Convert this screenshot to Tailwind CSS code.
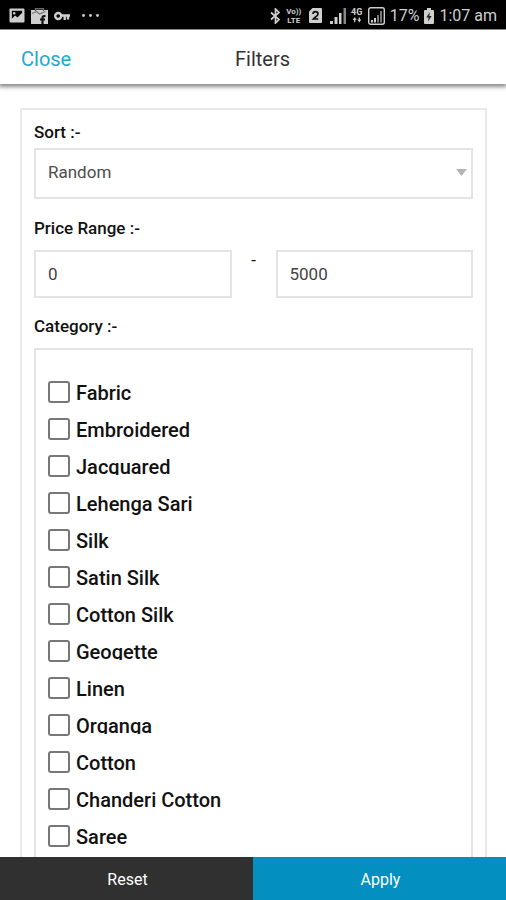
<!DOCTYPE html>
<html lang="en">
<head>
<meta charset="utf-8">
<meta name="viewport" content="width=device-width, initial-scale=1">
<title>Filters</title>
<script src="https://cdn.jsdelivr.net/npm/@tailwindcss/browser@4"></script>
</head>
<body class="flex h-screen flex-col overflow-hidden bg-white font-['Roboto',sans-serif] text-[#111111]">

<!-- Status bar -->
<div class="flex h-[30px] shrink-0 items-center justify-between border-b border-[#999999] bg-black pt-[2px] pr-[9px] pl-[9px] text-[#cfcfcf]">
  <div class="flex items-center gap-[6px]">
    <svg class="h-[15px] w-4" viewBox="0 0 16 16" fill="currentColor" aria-hidden="true"><path fill-rule="evenodd" d="M1 0.500h14a1 1 0 0 1 1 1v13a1 1 0 0 1-1 1H1a1 1 0 0 1-1-1v-13a1 1 0 0 1 1-1zM2.500 3v8.500L6 8l2.500 2 5-5V3z"/><circle cx="5" cy="5.500" r="1.300"/></svg>
    <svg class="h-4 w-[17px]" viewBox="0 0 17 16" aria-hidden="true"><path d="M0 2h17v14H0z" fill="#cfcfcf"/><path d="M4.500 3V.7h8V3" fill="none" stroke="#666666" stroke-width="1.400"/><path d="M1 5.500l4.500-2 3 2.500 6-2.500" fill="none" stroke="#777777" stroke-width="1.300"/><path d="M14.500 8h-1.300c-1.200 0-1.700.7-1.700 2v6M9 11.500h5" fill="none" stroke="#111111" stroke-width="2.200"/></svg>
    <svg class="h-4 w-4" viewBox="0 0 16 16" fill="none" stroke="currentColor" stroke-width="2.400" aria-hidden="true"><circle cx="4.200" cy="8" r="3"/><path d="M7.300 7.500H16M10.700 8v4M14 8v3.500"/></svg>
    <svg class="ml-[6px] h-4 w-[17px]" viewBox="0 0 17 16" fill="currentColor" aria-hidden="true"><circle cx="1.500" cy="7.500" r="1.400"/><circle cx="8.500" cy="7.500" r="1.400"/><circle cx="15.500" cy="7.500" r="1.400"/></svg>
  </div>
  <div class="flex items-center gap-[5px]">
    <svg class="h-4 w-[11px]" viewBox="0 0 11 16" fill="none" stroke="currentColor" stroke-width="1.700" aria-hidden="true"><path d="M1 4.500l8 7L5.500 15V1L9 4.500l-8 7"/></svg>
    <div class="flex w-4 flex-col items-center text-[8px] leading-[9px] font-bold"><span>Vo))</span><span>LTE</span></div>
    <svg class="ml-[2px] h-[15px] w-[13px]" viewBox="0 0 13 15" aria-hidden="true"><path d="M3.500 0H12a1 1 0 0 1 1 1v13a1 1 0 0 1-1 1H1a1 1 0 0 1-1-1V3.500z" fill="#cfcfcf"/><path d="M4 6c0-3.200 5-3.200 5 0 0 2-3 3-4.700 5H9.300" fill="none" stroke="#111111" stroke-width="1.700"/></svg>
    <svg class="ml-[3px] h-4 w-4" viewBox="0 0 16 16" fill="currentColor" aria-hidden="true"><path d="M0 13h3v3H0zM4.500 9h3v7h-3zM9 5h2.500v11H9z"/><path d="M13.500 0H16v16h-2.500z" fill="#888888"/></svg>
    <div class="flex w-[12px] flex-col items-center text-[9px] leading-[9px] font-bold"><span>4G</span>
      <svg class="h-[6px] w-[10px]" viewBox="0 0 10 7" fill="currentColor" aria-hidden="true"><path d="M0 3.500L2.300 0l2.300 3.500H3v2.500H1.600V3.500zM5.400 3L7.700 6.500 10 3H8.400V.5H7V3z"/></svg>
    </div>
    <svg class="h-[18px] w-[17px]" viewBox="0 0 17 18" fill="currentColor" aria-hidden="true"><rect x=".7" y=".7" width="15.600" height="16.600" rx="2" fill="none" stroke="currentColor" stroke-width="1.400"/><path d="M3 13h2v2.500H3zM6 11h2v4.500H6z"/><path d="M9 8h2v7.500H9zM12 4h2v11.500h-2z" fill="#777777"/></svg>
    <span class="text-[16px] leading-5">17%</span>
    <svg class="h-4 w-[10px]" viewBox="0 0 10 16" aria-hidden="true"><path d="M3 0h4v2h2a1 1 0 0 1 1 1v12a1 1 0 0 1-1 1H1a1 1 0 0 1-1-1V3a1 1 0 0 1 1-1h2z" fill="#cfcfcf"/><path d="M5.800 4L2.300 9.500h2.300L4 13.500 7.700 8H5.300z" fill="#222222"/></svg>
    <span class="text-[16px] leading-5">1:07 am</span>
  </div>
</div>

<!-- Title bar -->
<header class="z-10 grid h-[54px] shrink-0 grid-cols-[1fr_auto_1fr] items-center bg-white pt-1 pr-[2px] pl-[21px] shadow-[0_2px_4px_1px_rgba(0,0,0,0.45)]">
  <a href="#" class="text-[20px] leading-6 text-[#23a9d0]">Close</a>
  <h1 class="text-[20px] leading-6 text-[#333333]">Filters</h1>
</header>

<form class="flex min-h-0 flex-1 flex-col">
  <main class="min-h-0 flex-1 overflow-hidden pt-6 pr-[19px] pl-5">
    <div class="border-2 border-[#e9e9e9] px-3 pt-3 pb-4">
      <label for="sort" class="block text-[17px] leading-5 font-medium">Sort :-</label>
      <div class="relative mt-[6px]">
        <select id="sort" class="block h-[51px] w-full appearance-none rounded-none border-2 border-[#e4e4e4] bg-white px-3 pb-[2px] text-[17px] text-[#4c4c4c]">
          <option>Random</option>
        </select>
        <svg class="pointer-events-none absolute top-[21px] right-[6px] h-[7px] w-[11px]" viewBox="0 0 11 7" fill="#b4b4b4" aria-hidden="true"><path d="M0 0h11L5.500 7z"/></svg>
      </div>

      <fieldset class="mt-[19px] min-w-0">
        <legend class="text-[17px] leading-5 font-medium">Price Range :-</legend>
        <div class="mt-3 flex">
          <input type="text" aria-label="Minimum price" value="0" class="h-12 min-w-0 flex-1 border-2 border-[#e4e4e4] px-3 text-[17px] text-[#444444]">
          <span class="w-11 text-center text-[17px] leading-5">-</span>
          <input type="text" aria-label="Maximum price" value="5000" class="h-12 min-w-0 flex-1 border-2 border-[#e4e4e4] px-3 text-[17px] text-[#444444]">
        </div>
      </fieldset>

      <fieldset class="mt-[18px] min-w-0">
        <legend class="text-[17px] leading-5 font-medium">Category :-</legend>
        <div class="mt-3 border-2 border-[#e4e4e4] px-3 py-[23px] text-[20px] leading-5 font-medium">
          <label class="flex h-[37px] items-center gap-[6px]"><input type="checkbox" class="h-[22px] w-[22px] appearance-none rounded-[3px] border-2 border-[#777777] bg-white checked:bg-[#0390c0]"><span class="h-[18px]">Fabric</span></label>
          <label class="flex h-[37px] items-center gap-[6px]"><input type="checkbox" class="h-[22px] w-[22px] appearance-none rounded-[3px] border-2 border-[#777777] bg-white checked:bg-[#0390c0]"><span class="h-[18px]">Embroidered</span></label>
          <label class="flex h-[37px] items-center gap-[6px]"><input type="checkbox" class="h-[22px] w-[22px] appearance-none rounded-[3px] border-2 border-[#777777] bg-white checked:bg-[#0390c0]"><span class="h-[18px] overflow-hidden">Jacquared</span></label>
          <label class="flex h-[37px] items-center gap-[6px]"><input type="checkbox" class="h-[22px] w-[22px] appearance-none rounded-[3px] border-2 border-[#777777] bg-white checked:bg-[#0390c0]"><span class="h-[18px]">Lehenga Sari</span></label>
          <label class="flex h-[37px] items-center gap-[6px]"><input type="checkbox" class="h-[22px] w-[22px] appearance-none rounded-[3px] border-2 border-[#777777] bg-white checked:bg-[#0390c0]"><span class="h-[18px]">Silk</span></label>
          <label class="flex h-[37px] items-center gap-[6px]"><input type="checkbox" class="h-[22px] w-[22px] appearance-none rounded-[3px] border-2 border-[#777777] bg-white checked:bg-[#0390c0]"><span class="h-[18px]">Satin Silk</span></label>
          <label class="flex h-[37px] items-center gap-[6px]"><input type="checkbox" class="h-[22px] w-[22px] appearance-none rounded-[3px] border-2 border-[#777777] bg-white checked:bg-[#0390c0]"><span class="h-[18px]">Cotton Silk</span></label>
          <label class="flex h-[37px] items-center gap-[6px]"><input type="checkbox" class="h-[22px] w-[22px] appearance-none rounded-[3px] border-2 border-[#777777] bg-white checked:bg-[#0390c0]"><span class="h-[18px] overflow-hidden">Geogette</span></label>
          <label class="flex h-[37px] items-center gap-[6px]"><input type="checkbox" class="h-[22px] w-[22px] appearance-none rounded-[3px] border-2 border-[#777777] bg-white checked:bg-[#0390c0]"><span class="h-[18px]">Linen</span></label>
          <label class="flex h-[37px] items-center gap-[6px]"><input type="checkbox" class="h-[22px] w-[22px] appearance-none rounded-[3px] border-2 border-[#777777] bg-white checked:bg-[#0390c0]"><span class="h-[18px] overflow-hidden">Organga</span></label>
          <label class="flex h-[37px] items-center gap-[6px]"><input type="checkbox" class="h-[22px] w-[22px] appearance-none rounded-[3px] border-2 border-[#777777] bg-white checked:bg-[#0390c0]"><span class="h-[18px]">Cotton</span></label>
          <label class="flex h-[37px] items-center gap-[6px]"><input type="checkbox" class="h-[22px] w-[22px] appearance-none rounded-[3px] border-2 border-[#777777] bg-white checked:bg-[#0390c0]"><span class="h-[18px]">Chanderi Cotton</span></label>
          <label class="flex h-[37px] items-center gap-[6px]"><input type="checkbox" class="h-[22px] w-[22px] appearance-none rounded-[3px] border-2 border-[#777777] bg-white checked:bg-[#0390c0]"><span class="h-[18px]">Saree</span></label>
        </div>
      </fieldset>
    </div>
  </main>

  <footer class="grid h-[43px] shrink-0 grid-cols-2 text-[16px] text-white">
    <button type="reset" class="bg-[#303030] pt-[2px] pl-[2px]">Reset</button>
    <button type="button" class="bg-[#0390c0] pt-[2px] pl-[2px]">Apply</button>
  </footer>
</form>
</body>
</html>
